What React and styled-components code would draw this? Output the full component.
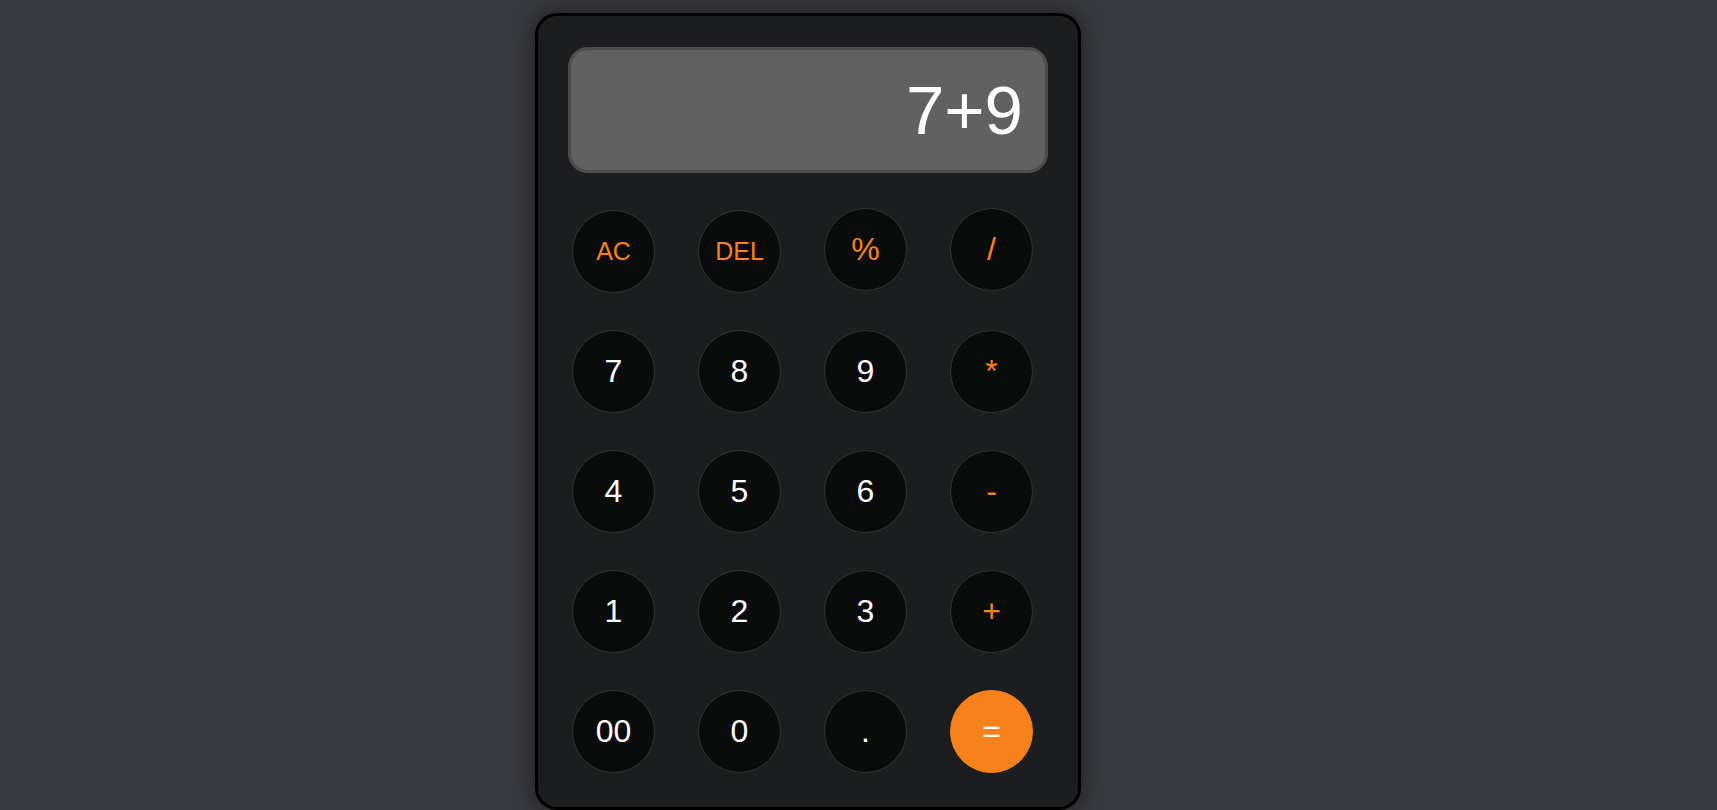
import styled, { createGlobalStyle } from 'styled-components';

const GlobalStyle = createGlobalStyle`
  html, body {
    margin : 0;
    padding : 0;
    background-color : #393a3f;
    font-family : "Liberation Sans", Arial, sans-serif;
  }
`

const Page = styled.div`
  min-height : 810px;
  padding : 13px 0 0 535px;
  box-sizing : border-box;
`

const Calculator = styled.div`
  width : 546px;
  box-sizing : border-box;
  background-color : #1c1d1f;
  border : 3px solid #000;
  border-radius : 22px;
  padding : 31px 30px 34px 30px;
  box-shadow : 0 0 22px rgba(0, 0, 0, 0.55);
`

const Display = styled.div`
  height : 126px;
  box-sizing : border-box;
  background-color : #616162;
  border : 3px solid #4c4c4e;
  border-radius : 20px;
  display : flex;
  align-items : center;
  justify-content : flex-end;
  padding : 0 22px 0 20px;
  color : #fff;
  font-size : 69px;
`

const Keys = styled.div`
  margin-top : 35px;
  padding-left : 4px;
  display : grid;
  grid-template-columns : repeat(4, 83px);
  column-gap : 43px;
  row-gap : 37px;
  align-items : baseline;
`

const Key = styled.button`
  width : 83px;
  height : 83px;
  box-sizing : border-box;
  border-radius : 50%;
  border : 1px solid ${props => props.equal ? '#f7821b' : '#343537'};
  background-color : ${props => props.equal ? '#f7821b' : '#0a0b0b'};
  color : ${props => props.op ? '#f7821b' : '#fff'};
  font-family : "Liberation Sans", Arial, sans-serif;
  font-size : ${props => props.small ? '25px' : '32px'};
  padding : 0;
  cursor : pointer;
`

const keys = [
  { label: 'AC', op: true, small: true },
  { label: 'DEL', op: true, small: true },
  { label: '%', op: true },
  { label: '/', op: true },
  { label: '7' },
  { label: '8' },
  { label: '9' },
  { label: '*', op: true },
  { label: '4' },
  { label: '5' },
  { label: '6' },
  { label: '-', op: true },
  { label: '1' },
  { label: '2' },
  { label: '3' },
  { label: '+', op: true },
  { label: '00' },
  { label: '0' },
  { label: '.' },
  { label: '=', equal: true },
]

function App() {
  return (
    <Page>
      <GlobalStyle />
      <Calculator>
        <Display>7+9</Display>
        <Keys>
          {keys.map(k => (
            <Key key={k.label} op={k.op} small={k.small} equal={k.equal}>
              {k.label}
            </Key>
          ))}
        </Keys>
      </Calculator>
    </Page>
  )
}

export default App
